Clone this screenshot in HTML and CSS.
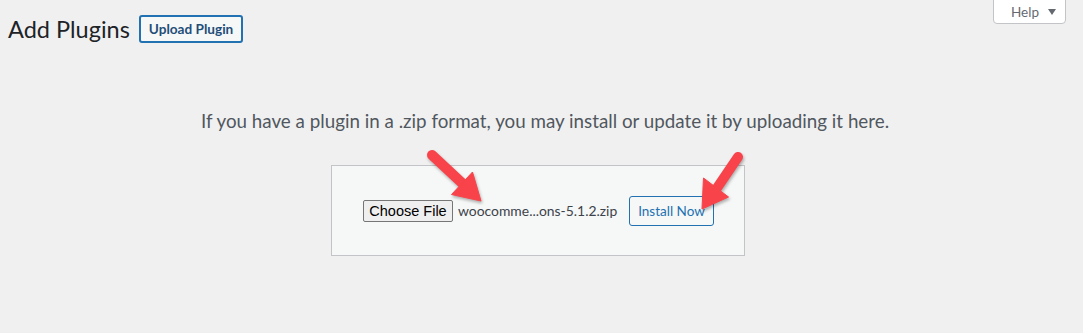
FILE: index.html
```html
<!DOCTYPE html>
<html lang="en">
<head>
<meta charset="utf-8">
<title>Add Plugins</title>
<link rel="stylesheet" href="styles.css">
</head>
<body>
<div class="screen-meta">
  <button class="help-tab">Help <span class="caret"></span></button>
</div>
<div class="wrap">
  <div class="title-row">
    <h1 class="page-title">Add Plugins</h1>
    <button class="title-action">Upload Plugin</button>
  </div>
  <div class="upload-plugin">
    <p class="install-help">If you have a plugin in a .zip format, you may install or update it by uploading it here.</p>
    <form class="upload-form">
      <div class="file-input">
        <button type="button" class="choose-file">Choose File</button>
        <span class="file-name">woocomme...ons-5.1.2.zip</span>
      </div>
      <button type="button" class="install-now">Install Now</button>
    </form>
  </div>
</div>
<svg class="arrows" width="1083" height="333" viewBox="0 0 1083 333">
  <g class="arrow">
    <line x1="432" y1="155" x2="462" y2="183"/>
    <polygon points="481,201 451.5,194.5 472.5,172"/>
  </g>
  <g class="arrow">
    <line x1="738" y1="157" x2="717" y2="188"/>
    <polygon points="702,209 703.5,178 728.5,197"/>
  </g>
</svg>
</body>
</html>
```

FILE: styles.css
```css
* { box-sizing: border-box; }
html, body {
  margin: 0;
  height: 100%;
}
body {
  background: #f0f0f1;
  font-family: Lato, "Noto Sans", sans-serif;
  color: #3c434a;
  position: relative;
  overflow: hidden;
}
.screen-meta {
  float: right;
  margin-right: 17px;
}
.help-tab {
  display: flex;
  align-items: center;
  gap: 9px;
  width: 73px;
  height: 25px;
  margin-top: -1px;
  padding: 0 0 0 17px;
  background: #fff;
  border: 1px solid #c3c4c7;
  border-radius: 0 0 4px 4px;
  font-family: Lato, "Noto Sans", sans-serif;
  font-size: 13.5px;
  color: #646970;
}
.caret {
  width: 0;
  height: 0;
  border-left: 4px solid transparent;
  border-right: 4px solid transparent;
  border-top: 6px solid #646970;
}
.wrap {
  margin: 0 15px 0 8px;
}
.title-row {
  display: flex;
  align-items: center;
  gap: 9px;
  padding-top: 15px;
}
.page-title {
  margin: 0;
  font-size: 23.5px;
  font-weight: 400;
  line-height: 28px;
  color: #1d2327;
}
.title-action {
  height: 28px;
  padding: 0 8px;
  background: #f6f7f7;
  border: 2px solid #2271b1;
  border-radius: 3px;
  font-family: Lato, "Noto Sans", sans-serif;
  font-size: 13.6px;
  font-weight: 700;
  color: #1f4e79;
}
.upload-plugin {
  display: flex;
  flex-direction: column;
  align-items: center;
}
.install-help {
  margin: 0;
  padding: 65px 0 0 14px;
  font-size: 18.8px;
  line-height: 26px;
  color: #50575e;
  text-align: center;
}
.upload-form {
  display: flex;
  align-items: center;
  justify-content: space-between;
  width: 414px;
  margin-top: 31px;
  padding: 30px 30px 29px 31px;
  background: #f6f7f7;
  border: 1px solid #c3c4c7;
}
.file-input {
  display: flex;
  align-items: center;
  gap: 5px;
  margin-top: -1px;
}
.choose-file {
  height: 22px;
  width: 90px;
  padding: 0;
  background: #efefef;
  border: 1px solid #767676;
  border-radius: 2px;
  font-family: "Liberation Sans", Arial, sans-serif;
  font-size: 14.5px;
  color: #000;
}
.file-name {
  font-size: 13.9px;
  color: #3c434a;
}
.install-now {
  width: 85px;
  height: 30px;
  padding: 0;
  background: #f6f7f7;
  border: 1px solid #2271b1;
  border-radius: 3px;
  font-family: Lato, "Noto Sans", sans-serif;
  font-size: 13.5px;
  color: #2271b1;
}
.arrows {
  position: absolute;
  left: 0;
  top: 0;
  pointer-events: none;
}
.arrow {
  filter: drop-shadow(1px 2px 1.5px rgba(0, 0, 0, 0.3));
}
.arrow line {
  stroke: #f8434a;
  stroke-width: 10;
  stroke-linecap: round;
}
.arrow polygon {
  fill: #f8434a;
  stroke: #f8434a;
  stroke-width: 1;
  stroke-linejoin: round;
}
```
